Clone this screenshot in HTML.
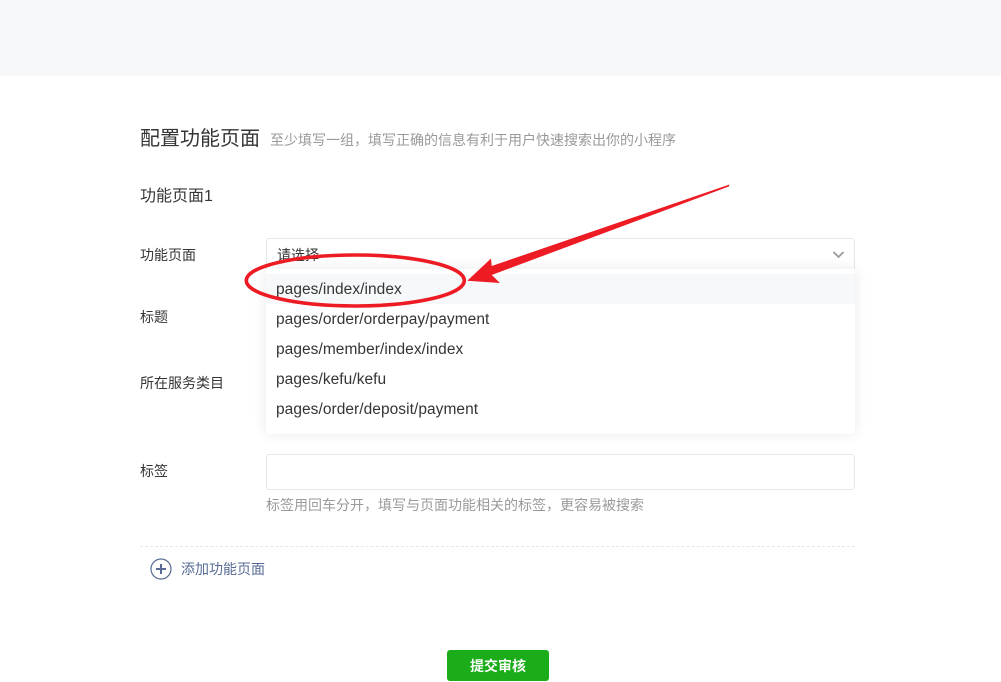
<!DOCTYPE html>
<html lang="zh">
<head>
<meta charset="utf-8">
<style>
html,body{margin:0;padding:0;background:#fff}
body{width:1001px;height:681px;position:relative;overflow:hidden;font-family:"Liberation Sans","Noto Sans CJK SC",sans-serif;color:#353535}
.a{position:absolute;white-space:nowrap}
.l{font-size:14px;line-height:20px;left:140px;color:#353535}
.opt{position:absolute;left:0;width:589px;height:30px;line-height:32px;padding-left:10px;box-sizing:border-box;font-size:15.5px;letter-spacing:.05px;color:#353535}
</style>
</head>
<body>
<div class="a" style="left:0;top:0;width:1001px;height:76px;background:#f6f8f9"></div>
<div class="a" style="left:140px;top:125px;font-size:20px;line-height:28px">配置功能页面</div>
<div class="a" style="left:270px;top:130px;font-size:14px;line-height:20px;color:#9a9a9a">至少填写一组，填写正确的信息有利于用户快速搜索出你的小程序</div>
<div class="a" style="left:140px;top:186px;font-size:16px;line-height:22px">功能页面1</div>
<div class="a l" style="top:245px">功能页面</div>
<div class="a l" style="top:307px">标题</div>
<div class="a l" style="top:373px">所在服务类目</div>
<div class="a l" style="top:461px">标签</div>
<div class="a" style="left:266px;top:238px;width:589px;height:36px;box-sizing:border-box;border:1px solid #e4e8eb;border-radius:3px;background:#fff"></div>
<div class="a" style="left:277px;top:245px;font-size:14px;line-height:20px">请选择</div>
<svg class="a" style="left:832px;top:250px" width="13" height="10" viewBox="0 0 13 10"><path d="M1.500 2 L6.500 7 L11.500 2" fill="none" stroke="#9a9a9a" stroke-width="1.800"/></svg>
<div class="a" style="left:266px;top:269px;width:589px;height:165px;background:#fff;border-radius:0 0 3px 3px;box-shadow:0 0 14px rgba(0,0,0,.09)">
<div class="opt" style="top:5px;background:#f6f8f9">pages/index/index</div>
<div class="opt" style="top:35px">pages/order/orderpay/payment</div>
<div class="opt" style="top:65px">pages/member/index/index</div>
<div class="opt" style="top:95px">pages/kefu/kefu</div>
<div class="opt" style="top:125px">pages/order/deposit/payment</div>
</div>
<div class="a" style="left:266px;top:454px;width:589px;height:36px;box-sizing:border-box;border:1px solid #e4e8eb;border-radius:3px;background:#fff"></div>
<div class="a" style="left:266px;top:495px;font-size:14px;line-height:20px;color:#9a9a9a">标签用回车分开，填写与页面功能相关的标签，更容易被搜索</div>
<div class="a" style="left:140px;top:546px;width:715px;height:0;border-top:1px dashed #e4e8eb"></div>
<svg class="a" style="left:150px;top:558px" width="22" height="22" viewBox="0 0 22 22"><circle cx="11" cy="11" r="10" fill="none" stroke="#576b95" stroke-width="1.200"/><path d="M6 11H16M11 6V16" stroke="#576b95" stroke-width="2" fill="none"/></svg>
<div class="a" style="left:181px;top:559px;font-size:14px;line-height:20px;color:#576b95">添加功能页面</div>
<div class="a" style="left:447px;top:650px;width:102px;height:31px;background:#1aad19;border-radius:3px;color:#fff;font-size:14px;font-weight:bold;line-height:32px;text-align:center">提交审核</div>
<svg class="a" style="left:0;top:0" width="1001" height="681" viewBox="0 0 1001 681">
<ellipse cx="355.300" cy="280.500" rx="109" ry="25.500" fill="none" stroke="#ed1c24" stroke-width="3.600"/>
<path d="M729.500 184.500 L728.800 186.500 L491.700 275 L500 283 L467.300 280.700 L491 258.500 L491.700 266 Z" fill="#ed1c24"/>
</svg>
</body>
</html>
